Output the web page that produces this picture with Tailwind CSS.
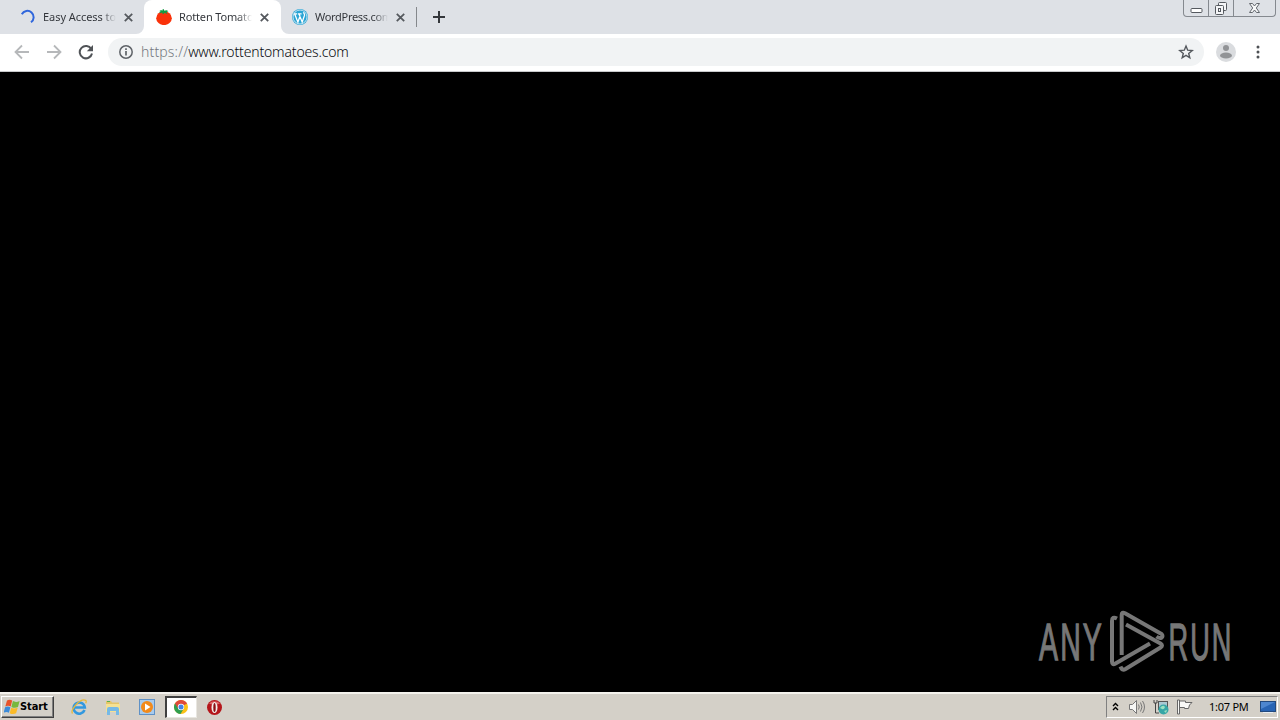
<!DOCTYPE html>
<html lang="en">
<head>
    <meta charset="UTF-8">
    <meta name="viewport" content="width=device-width, initial-scale=1.0">
    <title>Rotten Tomatoes</title>
    <script src="https://cdn.jsdelivr.net/npm/@tailwindcss/browser@4"></script>
</head>
<body class="w-[1280px] h-[720px] overflow-hidden bg-black flex flex-col font-['Noto_Sans',sans-serif]">

    <!-- Tab strip -->
    <header class="h-[34px] shrink-0 bg-[#dee1e6] flex text-[11px] text-[#3c4043]">
        <div class="w-[144px] h-full flex items-center pl-5 relative">
            <svg class="w-4 h-4 shrink-0" viewBox="0 0 16 16" fill="none" stroke="#2f66dc" stroke-width="2"><path d="M1.8 5.2A6.3 6.3 0 1 1 11 13.3"/></svg>
            <span class="ml-[7px] w-[73px] overflow-hidden whitespace-nowrap tracking-[-0.05px] bg-linear-to-r from-[#303338] from-80% to-[#dee1e6] bg-clip-text text-transparent">Easy Access to</span>
            <svg class="ml-2 w-[9px] h-[9px] shrink-0" viewBox="0 0 9 9" stroke="#55595e" stroke-width="1.8"><path d="M.8.8l7.4 7.4M8.2.8L.8 8.2"/></svg>
        </div>
        <div class="w-[137px] h-full bg-white rounded-t-lg flex items-center pl-3 relative">
            <svg class="absolute bottom-0 -left-2 w-2 h-2" viewBox="0 0 8 8" fill="#fff"><path d="M8 0v8H0a8 8 0 0 0 8-8z"/></svg>
            <svg class="absolute bottom-0 -right-2 w-2 h-2" viewBox="0 0 8 8" fill="#fff"><path d="M0 0v8h8a8 8 0 0 1-8-8z"/></svg>
            <svg class="w-4 h-4 shrink-0" viewBox="0 0 16 16">
                <ellipse cx="8" cy="9.2" rx="7.8" ry="6.9" fill="#fa320a"/>
                <path fill="#139b43" d="M6.4.4l1.2-.3.8 1.600c1.500-.9 3-.7 4 .7-1 .1-1.500.3-2 .8l1.200 1.500c-1.500 0-2.300-.5-3-1-.4 1-1.200 1.200-2 1.500 0-.8-.1-1.200-.4-1.700-1 .6-2 .8-3.200.5.700-.5 1-1 1.500-1.500-.5-.2-1-.2-1.500 0 .9-1.200 2.600-1.600 4-.9z"/>
            </svg>
            <span class="ml-[7px] w-[73px] overflow-hidden whitespace-nowrap tracking-[-0.15px] bg-linear-to-r from-[#303338] from-80% to-white bg-clip-text text-transparent">Rotten Tomato</span>
            <svg class="ml-2 w-[9px] h-[9px] shrink-0" viewBox="0 0 9 9" stroke="#55595e" stroke-width="1.8"><path d="M.8.8l7.4 7.4M8.2.8L.8 8.2"/></svg>
        </div>
        <div class="w-[136px] h-full flex items-center pl-[11px] relative">
            <svg class="w-4 h-4 shrink-0" viewBox="0 0 16 16">
                <circle cx="8" cy="8" r="8" fill="#2aa5d5"/>
                <circle cx="8" cy="8" r="7" fill="none" stroke="#e4f1f7" stroke-width=".8"/>
                <path d="M2.700 5l3.200 8.200L8.200 6.500M7 5l3.200 8.200 2.300-6.800c.4-1.600-1-2-1-3.200M1.800 4.800h3.400M6 4.800h3.600" fill="none" stroke="#fff" stroke-width="1.300"/>
            </svg>
            <span class="ml-[7px] w-[73px] overflow-hidden whitespace-nowrap tracking-[-0.3px] bg-linear-to-r from-[#303338] from-80% to-[#dee1e6] bg-clip-text text-transparent">WordPress.com</span>
            <svg class="ml-2 w-[9px] h-[9px] shrink-0" viewBox="0 0 9 9" stroke="#55595e" stroke-width="1.8"><path d="M.8.8l7.4 7.4M8.2.8L.8 8.2"/></svg>
            <div class="absolute right-0 top-[7px] w-px h-5 bg-[#85888c]"></div>
        </div>
        <svg class="ml-4 mt-[11px] w-3 h-3" viewBox="0 0 12 12" stroke="#34373b" stroke-width="2"><path d="M6 0v12M0 6h12"/></svg>

        <!-- Window buttons -->
        <div class="ml-auto mr-[4px] h-[17px] w-[93px] flex border border-t-0 border-[#85898f] rounded-b-[4px]">
            <div class="w-[25px] border-r border-[#85898f] flex justify-center">
                <svg class="w-[13px] h-4" viewBox="0 0 13 16"><rect x="1" y="8.500" width="11" height="4" rx="1" fill="#fff" stroke="#55595f"/></svg>
            </div>
            <div class="w-[25px] border-r border-[#85898f] flex justify-center">
                <svg class="w-[14px] h-4" viewBox="0 0 14 16" fill="#f4f5f7" stroke="#55595f"><rect x="4.500" y="2.500" width="8" height="8" rx="1"/><rect x="1.500" y="5.500" width="8" height="9" rx="1"/><rect x="4.500" y="8.500" width="2" height="3"/></svg>
            </div>
            <div class="flex-1 flex justify-center">
                <svg class="w-[13px] h-4" viewBox="0 0 13 16"><path d="M1.500 3.500h3l2 2.500 2-2.500h3L8.300 8l3.200 4.500h-3l-2-2.500-2 2.500h-3L4.700 8z" fill="#f7f8f9" stroke="#63676d"/></svg>
            </div>
        </div>
    </header>

    <!-- Toolbar -->
    <nav class="h-[38px] shrink-0 bg-white border-b border-[#c8c9cb] pb-px flex items-center text-[#5f6368]">
        <svg class="ml-[14px] w-4 h-4" viewBox="0 0 16 16" fill="none" stroke="#b6b8ba" stroke-width="1.800"><path d="M15 8H2M8 1.500L1.500 8 8 14.500"/></svg>
        <svg class="ml-4 w-4 h-4" viewBox="0 0 16 16" fill="none" stroke="#b6b8ba" stroke-width="1.800"><path d="M1 8h13M8 1.500L14.500 8 8 14.500"/></svg>
        <svg class="ml-4 w-4 h-4" viewBox="0 0 16 16"><path d="M13.300 5A6.200 6.200 0 1 0 14 9.500" fill="none" stroke="#505357" stroke-width="2"/><path d="M15 1v6.200H8.800z" fill="#505357"/></svg>
        <div class="ml-[14px] w-[1096px] h-7 rounded-full bg-[#f1f3f4] flex items-center pl-[11px] pr-[10px]">
            <svg class="w-[14px] h-[14px]" viewBox="0 0 14 14"><circle cx="7" cy="7" r="6.200" fill="none" stroke="#5f6368" stroke-width="1.500"/><path d="M7 6v4.500M7 3.300v1.700" stroke="#5f6368" stroke-width="1.700"/></svg>
            <span class="ml-2 text-[14px] leading-7 font-light whitespace-nowrap text-[#07090c]"><span class="text-[#75797e] tracking-[0.15px]">https://</span><span class="tracking-[-0.16px]">www.rottentomatoes.com</span></span>
            <svg class="ml-auto w-4 h-4" viewBox="0 0 16 16" fill="none" stroke="#54585d" stroke-width="1.400"><path d="M8 2l1.700 4.200 4.500.3-3.500 2.900 1.100 4.400L8 11.400l-3.800 2.400 1.100-4.400-3.500-2.900 4.500-.3z"/></svg>
        </div>
        <svg class="ml-3 w-5 h-5" viewBox="0 0 20 20"><circle cx="10" cy="10" r="10" fill="#dadcdf"/><circle cx="10" cy="6" r="3" fill="#919396"/><ellipse cx="10" cy="13.500" rx="6" ry="3" fill="#919396"/></svg>
        <svg class="ml-[20px] w-1 h-4" viewBox="0 0 4 16" fill="#4d5054"><circle cx="2" cy="3" r="1.500"/><circle cx="2" cy="8" r="1.500"/><circle cx="2" cy="13" r="1.500"/></svg>
    </nav>

    <!-- Page, not painted yet -->
    <main class="flex-1 bg-black flex items-end justify-end pr-[42px] pb-[19px]">
        <svg class="w-[200px] h-[64px]" viewBox="0 0 200 64" fill="#777">
            <g font-family="Liberation Sans, sans-serif" font-size="52" letter-spacing="4" stroke="#777" stroke-width="1.300">
                <text x="1" y="50.500" textLength="65" lengthAdjust="spacingAndGlyphs">ANY</text>
                <text x="130.500" y="50.500" textLength="65" lengthAdjust="spacingAndGlyphs">RUN</text>
            </g>
            <g fill="none" stroke="#777" stroke-width="4" stroke-linejoin="round" stroke-linecap="butt">
                <path d="M79 9.500Q74 7 74 12V52.500Q74 56.500 77.500 54.500L112 34.500"/>
                <path d="M83.700 46V6Q83.700 2.500 87 4.200L123.500 25Q125.500 27 123.500 28.800Q121.500 29.800 118.500 27.500"/>
                <path d="M88 15.500L122.500 34.500Q125.500 36.500 122.500 38.500L87.500 60Q84 62 82.500 57.500"/>
            </g>
        </svg>
    </main>

    <!-- Taskbar -->
    <footer class="h-[28px] shrink-0 bg-[#d4d0c8] border-t-2 border-[#f4f2ed] flex items-center text-[11px] text-black">
        <div class="ml-px w-[53px] h-[22px] flex items-center pl-[2px] border border-t-white border-l-white border-r-[#404040] border-b-[#404040] shadow-[inset_-1px_-1px_#808080]">
            <svg class="w-4 h-4 shrink-0" viewBox="0 0 16 16">
                <path fill="#e8532a" d="M3 1.500Q5.500-.2 8.200 1.500L6.700 7.400Q4 6 1.300 7.400z"/>
                <path fill="#78b83d" d="M8.900 2.100Q12 3.800 15.600 2L14 8Q10.800 9.600 7.400 7.900z"/>
                <path fill="#3c8bd9" d="M1.100 8.200Q3.700 6.700 6.400 8.200L4.900 13.700Q2.500 12.300-.4 13.700z"/>
                <path fill="#fbbb28" d="M7.200 8.700Q10 10.300 13.700 8.800L12.100 14.300Q9 15.900 5.700 14.200z"/>
            </svg>
            <span class="font-['DejaVu_Sans_Condensed','DejaVu_Sans',sans-serif] font-bold tracking-[-0.1px]">Start</span>
        </div>
        <svg class="ml-[17px] w-4 h-4" viewBox="0 0 16 16" fill="none">
            <path d="M13.500 11A5.600 5.600 0 1 1 13.800 8.500H4" stroke="#3298df" stroke-width="2.600"/>
            <path d="M1.500 14.500C-1 11 9-1 14.700 1.300q1 .8 0 3" stroke="#e7b83a" stroke-width="1.300"/>
        </svg>
        <svg class="ml-[18px] w-4 h-4" viewBox="0 0 16 16">
            <path fill="#e5c569" d="M1 2h5l1 1.500h7V12H1z"/><path fill="#58b04d" d="M2 2h3v1H2z"/><path fill="#f5e193" d="M1 5h14v8H1z"/>
            <path fill="#76b9e6" d="M2 10q0-2 2-2h8q2 0 2 2v6h-3v-4H5v4H2z"/>
        </svg>
        <svg class="ml-[18px] w-4 h-4" viewBox="0 0 16 16">
            <rect x=".5" y=".5" width="15" height="15" fill="#a8cbed" stroke="#5f91c6"/>
            <circle cx="8" cy="8" r="6" fill="#f28a1b"/><path d="M6 4.500L11.500 8 6 11.500z" fill="#fff"/>
        </svg>
        <div class="ml-[10px] w-[32px] h-[22px] bg-white border-t-2 border-l-2 border-t-[#404040] border-l-[#404040] border-r border-r-[#e8e6e0] border-b border-b-[#e8e6e0] flex items-center justify-center">
            <svg class="-mt-px mr-px w-[14px] h-[14px]" viewBox="0 0 14 14">
                <circle cx="7" cy="7" r="7" fill="#fbc116"/>
                <path fill="#df4a3b" d="M7 7L.94 3.500a7 7 0 0 1 12.120 0z"/>
                <path fill="#2f9e4f" d="M7 7L.94 3.500A7 7 0 0 0 6.500 14L9.500 9z"/>
                <path fill="#df4a3b" d="M.94 3.500L4.200 8.500 7 3.700h6.200z"/>
                <circle cx="7" cy="7" r="3.200" fill="#fff"/><circle cx="7" cy="7" r="2.500" fill="#4383e6"/>
            </svg>
        </div>
        <svg class="ml-[9px] w-4 h-4" viewBox="0 0 16 16"><circle cx="8.500" cy="8.500" r="7.500" fill="#b5161b"/><path d="M3 4.500A7 6 0 0 1 14 4.500Q8.500 7 3 4.500z" fill="#dc6667"/><ellipse cx="8.500" cy="8.500" rx="3" ry="5.500" fill="#f3efec"/><ellipse cx="8.500" cy="8.500" rx="1.200" ry="4.600" fill="#8c1014"/></svg>

        <!-- Tray -->
        <div class="ml-auto mr-[2px] w-[172px] h-[22px] border border-t-[#808080] border-l-[#808080] border-r-white border-b-white flex items-center">
            <svg class="ml-[5px] -mt-[2px] w-[7px] h-[9px]" viewBox="0 0 7 9" fill="none" stroke="#000" stroke-width="1.400"><path d="M1 4l2.500-2.500L6 4M1 8l2.500-2.500L6 8"/></svg>
            <svg class="ml-[10px] w-4 h-4" viewBox="0 0 16 16" fill="none" stroke="#777"><path d="M.5 5.500h3l4-4v13l-4-4h-3z" fill="#f6f6f4"/><path d="M9.500 5.500q1.500 2.500 0 5M11.500 3.500q3 4.500 0 9M13.500 2q4 6 0 12"/></svg>
            <svg class="ml-[8px] w-4 h-4" viewBox="0 0 16 16"><path d="M1 1v3h3V1M2.500 4v10H6" fill="none" stroke="#444"/><rect x="5.500" y="2.500" width="9" height="8" fill="#a9c8d2" stroke="#555"/><circle cx="10.500" cy="10.500" r="5" fill="#36a6a6"/><path d="M7 9q3-4 5-1-1 3-3 2zM11 12l3-1-1 3z" fill="#9ae0c0"/></svg>
            <svg class="ml-[8px] w-4 h-4" viewBox="0 0 16 16" fill="#f8f8f6" stroke="#666"><path d="M2.500 2h6v1.500h6.500L12.500 6l-1 3.500H7.500V8.500H2.500"/><path d="M.5 1h2v14h-2z"/></svg>
            <span class="ml-[16px] w-[41px] whitespace-nowrap tracking-[-0.25px]">1:07 PM</span>
            <svg class="ml-[10px] w-4 h-[14px]" viewBox="0 0 16 14"><rect x=".5" y="1.500" width="15" height="10" fill="#2864b4" stroke="#22497e"/><path d="M1 2h14L1 9z" fill="#4d86cf"/><path d="M3 12h10v1H3z" fill="#e8edf3"/></svg>
        </div>
    </footer>
</body>
</html>
